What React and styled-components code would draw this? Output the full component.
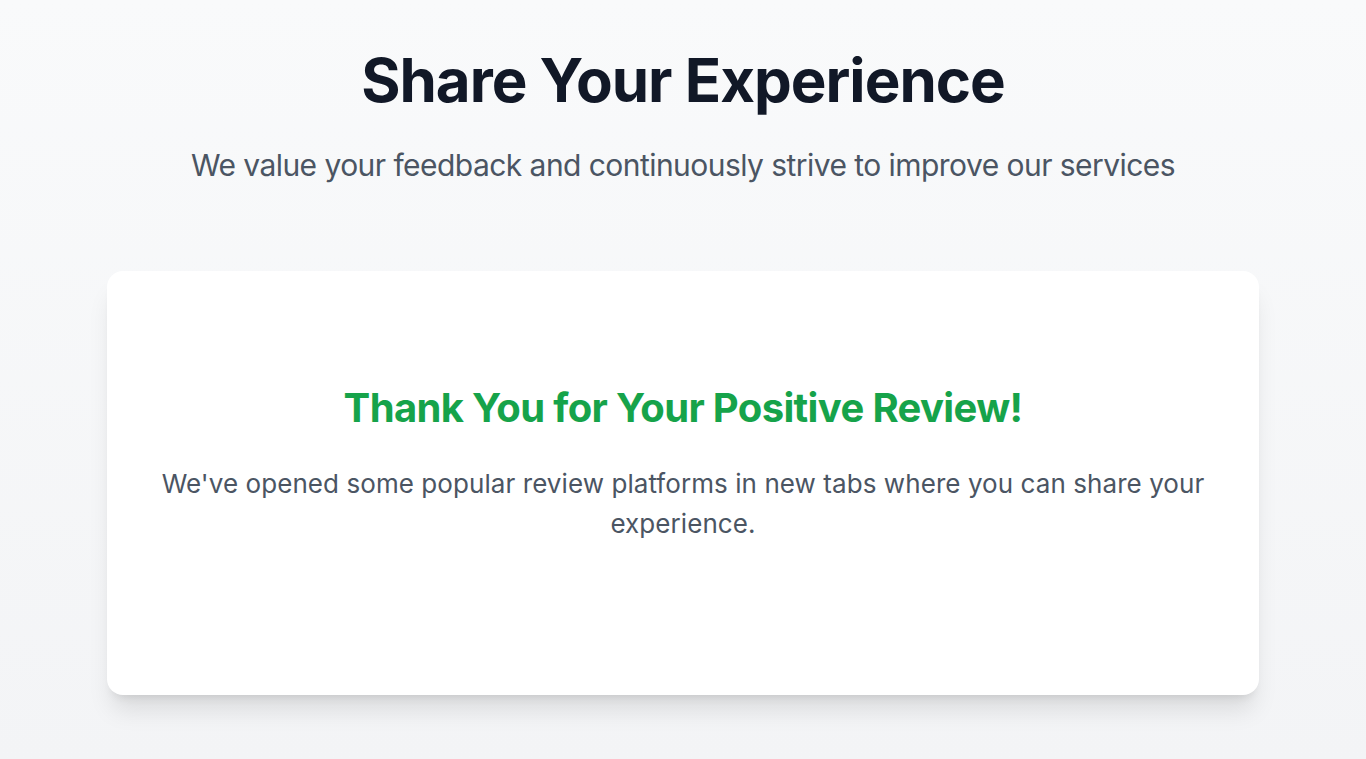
import React from "react";
import styled, { createGlobalStyle } from "styled-components";

const GlobalStyle = createGlobalStyle`
  html, body { margin: 0; padding: 0; }
  body {
    font-family: Inter, "Noto Sans", "Liberation Sans", sans-serif;
    -webkit-font-smoothing: antialiased;
  }
`;

const Page = styled.main`
  min-height: 759px;
  box-sizing: border-box;
  background: linear-gradient(to bottom, #f9fafb, #f3f4f6);
  padding: 50px 107px 64px;
  display: flex;
  flex-direction: column;
  align-items: center;
`;

const Header = styled.header`
  display: flex;
  flex-direction: column;
  align-items: center;
  text-align: center;
`;

const Title = styled.h1`
  margin: 0;
  font-size: 60px;
  line-height: 60px;
  font-weight: 700;
  color: #111827;
  letter-spacing: -1px;
`;

const Subtitle = styled.p`
  margin: 37px 0 0;
  font-size: 30px;
  line-height: 36px;
  font-weight: 400;
  color: #4b5563;
  letter-spacing: -0.55px;
`;

const Card = styled.section`
  margin-top: 88px;
  width: 1152px;
  height: 424px;
  box-sizing: border-box;
  background: #ffffff;
  border-radius: 16px;
  box-shadow: 0 20px 25px -5px rgba(0, 0, 0, 0.1), 0 8px 10px -6px rgba(0, 0, 0, 0.1);
  padding: 117px 36px 0;
  display: flex;
  flex-direction: column;
  align-items: center;
  text-align: center;
`;

const CardTitle = styled.h2`
  margin: 0;
  font-size: 40px;
  line-height: 40px;
  font-weight: 700;
  color: #16a34a;
  letter-spacing: -0.65px;
`;

const CardText = styled.p`
  margin: 36px 0 0;
  font-size: 26px;
  line-height: 40px;
  color: #4b5563;
  letter-spacing: 0.07px;
`;

export default function App() {
  return (
    <>
      <GlobalStyle />
      <Page>
        <Header>
          <Title>Share Your Experience</Title>
          <Subtitle>We value your feedback and continuously strive to improve our services</Subtitle>
        </Header>
        <Card>
          <CardTitle>Thank You for Your Positive Review!</CardTitle>
          <CardText>
            We've opened some popular review platforms in new tabs where you can share your experience.
          </CardText>
        </Card>
      </Page>
    </>
  );
}
